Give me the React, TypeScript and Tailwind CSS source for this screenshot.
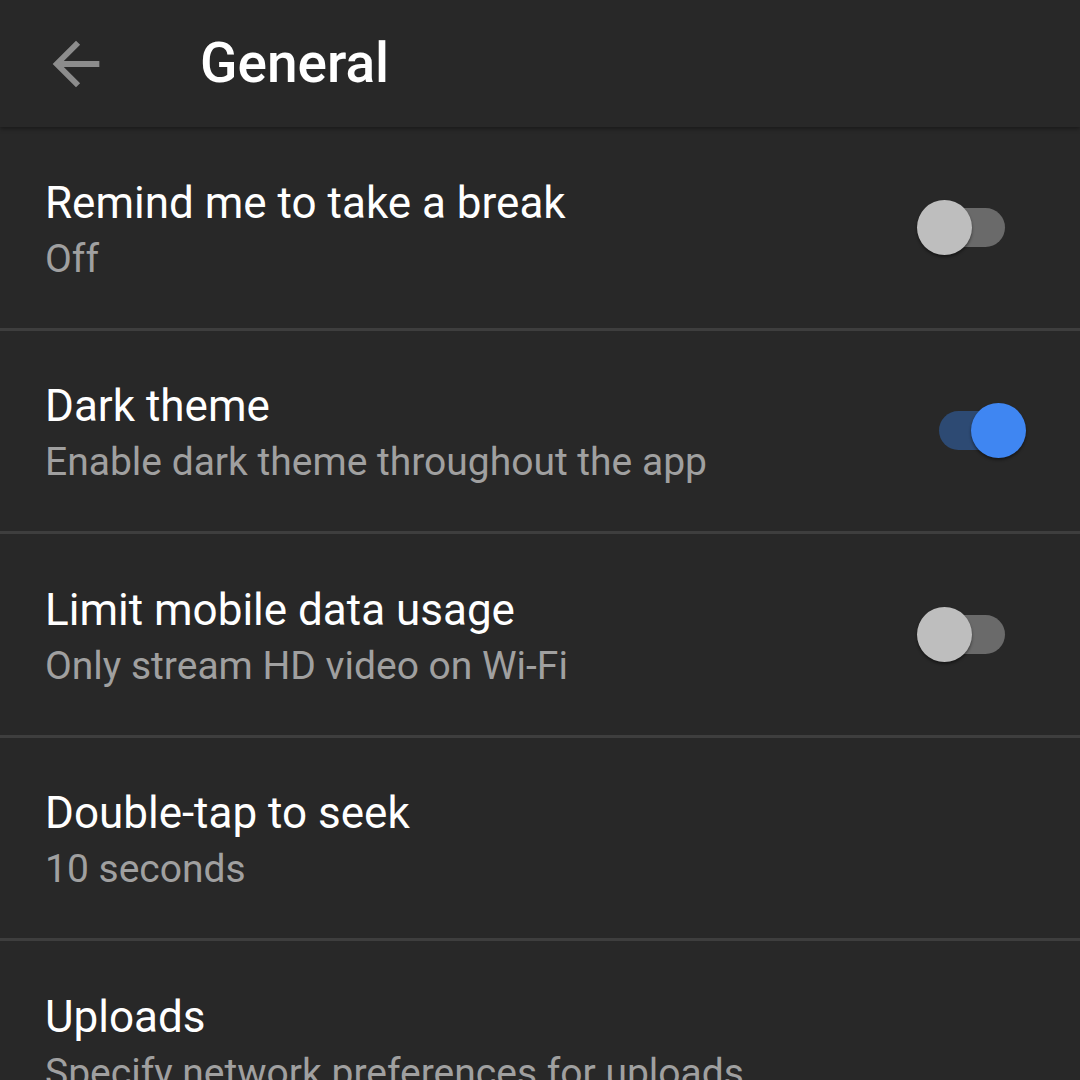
const rows = [
  { title: 'Remind me to take a break', sub: 'Off', toggle: 'off' },
  { title: 'Dark theme', sub: 'Enable dark theme throughout the app', toggle: 'on' },
  { title: 'Limit mobile data usage', sub: 'Only stream HD video on Wi-Fi', toggle: 'off' },
  { title: 'Double-tap to seek', sub: '10 seconds', toggle: null },
  { title: 'Uploads', sub: 'Specify network preferences for uploads', toggle: null },
];

function Toggle({ on }: { on: boolean }) {
  if (on) {
    return (
      <div className="relative mr-[54px] h-[55px] w-[87px] shrink-0">
        <div className="absolute left-0 top-[8px] h-[39px] w-[80px] rounded-full bg-[#2d4a73]" />
        <div className="absolute right-0 top-0 h-[55px] w-[55px] rounded-full bg-[#3f86f2] shadow-[0_2px_3px_rgba(0,0,0,0.45)]" />
      </div>
    );
  }
  return (
    <div className="relative mr-[75px] h-[55px] w-[88px] shrink-0">
      <div className="absolute right-0 top-[8px] h-[39px] w-[84px] rounded-full bg-[#6a6a6a]" />
      <div className="absolute left-0 top-0 h-[55px] w-[55px] rounded-full bg-[#bebebe] shadow-[0_2px_3px_rgba(0,0,0,0.45)]" />
    </div>
  );
}

export default function App() {
  return (
    <div className="h-[1080px] w-[1080px] overflow-hidden bg-[#282828]" style={{ fontFamily: 'Roboto, sans-serif' }}>
      {/* header */}
      <div className="relative z-10 flex h-[127px] items-center bg-[#282828] shadow-[0_2px_4px_rgba(0,0,0,0.35)]">
        <svg viewBox="0 0 24 24" className="ml-[41px] h-[70px] w-[70px] fill-[#8c8c8c]">
          <path d="M20 11H7.83l5.59-5.59L12 4l-8 8 8 8 1.41-1.41L7.83 13H20v-2z" />
        </svg>
        <div className="ml-[89px] text-[55px] font-medium leading-none text-white">General</div>
      </div>

      {rows.map((r, i) => (
        <div key={i} className="box-content flex h-[200.5px] items-center border-b-[3px] border-[#3e3e3e] pl-[45px]">
          <div className="flex-1 pt-[7px]">
            <div className="text-[44px] leading-[56px] text-white">{r.title}</div>
            <div className="whitespace-nowrap text-[39px] leading-[56px] text-[#a0a0a0]">{r.sub}</div>
          </div>
          {r.toggle && <Toggle on={r.toggle === 'on'} />}
        </div>
      ))}
    </div>
  );
}
